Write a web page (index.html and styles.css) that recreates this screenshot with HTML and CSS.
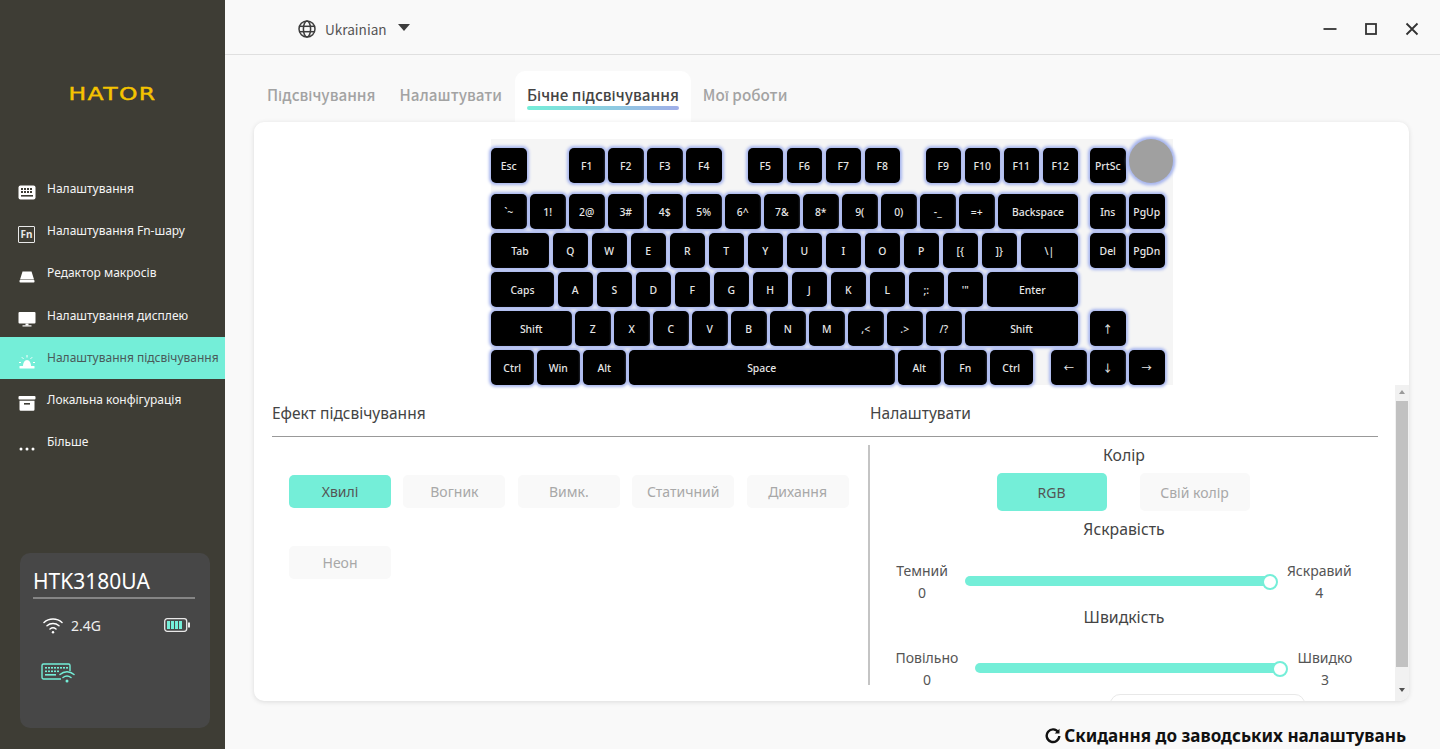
FILE: index.html
```html
<!DOCTYPE html>
<html lang="uk">
<head>
<meta charset="utf-8">
<title>HATOR</title>
<link rel="stylesheet" href="styles.css">
</head>
<body>
<div class="app">
  <aside class="sidebar">
    <div class="logo">HATOR</div>
    <nav class="nav">
      <div class="nav-item">
        <svg class="nav-icon" viewBox="0 0 18 15"><rect x="0.5" y="0.5" width="17" height="14" rx="2" fill="#fff"/><g fill="#3e3d35"><rect x="3" y="3" width="2" height="2"/><rect x="6" y="3" width="2" height="2"/><rect x="9" y="3" width="2" height="2"/><rect x="12" y="3" width="2" height="2"/><rect x="3" y="6" width="2" height="2"/><rect x="6" y="6" width="2" height="2"/><rect x="9" y="6" width="2" height="2"/><rect x="12" y="6" width="2" height="2"/><rect x="3" y="10" width="12" height="1.6"/></g></svg>
        <span>Налаштування</span>
      </div>
      <div class="nav-item">
        <span class="fn-icon">Fn</span>
        <span>Налаштування Fn-шару</span>
      </div>
      <div class="nav-item">
        <svg class="nav-icon" viewBox="0 0 18 15"><path d="M4.5 2.5h9l2.5 8H2z" fill="#fff"/><rect x="1.5" y="11" width="15" height="2.5" rx="0.8" fill="#fff"/></svg>
        <span>Редактор макросів</span>
      </div>
      <div class="nav-item">
        <svg class="nav-icon" viewBox="0 0 18 15"><rect x="0.5" y="0" width="17" height="11.5" rx="1" fill="#fff"/><rect x="7.5" y="11.5" width="3" height="2" fill="#fff"/><rect x="4.5" y="13.3" width="9" height="1.2" fill="#fff"/></svg>
        <span>Налаштування дисплею</span>
      </div>
      <div class="nav-item nav-active">
        <svg class="nav-icon" viewBox="0 0 18 15"><path d="M5 12c0-3 1.6-6 4-6s4 3 4 6z" fill="#fff"/><rect x="1.5" y="12" width="15" height="2.5" rx="0.6" fill="#fff"/><g stroke="#fff" stroke-width="1" fill="none"><path d="M9 1v2.5"/><path d="M3.8 3.2l1.7 1.7"/><path d="M14.2 3.2l-1.7 1.7"/><path d="M1 8.5h2"/><path d="M15 8.5h2"/></g></svg>
        <span>Налаштування підсвічування</span>
      </div>
      <div class="nav-item">
        <svg class="nav-icon" viewBox="0 0 18 15"><rect x="0.5" y="0" width="17" height="3.6" rx="1" fill="#fff"/><path d="M1.5 4.8h15v8.7a1.2 1.2 0 0 1-1.2 1.2H2.7a1.2 1.2 0 0 1-1.2-1.2z" fill="#fff"/><rect x="6" y="7" width="6" height="1.6" fill="#3e3d35"/></svg>
        <span>Локальна конфігурація</span>
      </div>
      <div class="nav-item">
        <svg class="nav-icon" viewBox="0 0 18 15"><circle cx="3" cy="11" r="1.5" fill="#fff"/><circle cx="9" cy="11" r="1.5" fill="#fff"/><circle cx="15" cy="11" r="1.5" fill="#fff"/></svg>
        <span>Більше</span>
      </div>
    </nav>
    <div class="device">
      <div class="device-name">HTK3180UA</div>
      <div class="device-status">
        <svg class="wifi" viewBox="0 0 20 17" fill="none" stroke="#fff" stroke-width="1.5" stroke-linecap="round"><path d="M1 5.5c5-4.6 13-4.6 18 0"/><path d="M4 8.8c3.400-3 8.600-3 12 0"/><path d="M7 12c1.800-1.400 4.200-1.400 6 0"/><circle cx="10" cy="15.300" r="1.200" fill="#fff" stroke="none"/></svg>
        <span class="conn">2.4G</span>
        <svg class="battery" viewBox="0 0 26 14"><rect x="0.7" y="0.7" width="22" height="12.600" rx="2.500" fill="none" stroke="#e8e8e8" stroke-width="1.300"/><rect x="24" y="4.500" width="2" height="5" fill="#e8e8e8"/><g fill="#74eed8"><rect x="3" y="3" width="3" height="8"/><rect x="7" y="3" width="3" height="8"/><rect x="11" y="3" width="3" height="8"/><rect x="15" y="3" width="3" height="8"/></g></svg>
      </div>
      <svg class="kb-wifi" viewBox="0 0 34 20" fill="none"><path d="M20 16H2.500A1.500 1.500 0 0 1 1 14.500V2.500A1.500 1.500 0 0 1 2.500 1h25A1.500 1.500 0 0 1 29 2.500V8" stroke="#74eed8" stroke-width="1.400"/><g fill="#74eed8"><rect x="4" y="4" width="2" height="1.600"/><rect x="7" y="4" width="2" height="1.600"/><rect x="10" y="4" width="2" height="1.600"/><rect x="13" y="4" width="2" height="1.600"/><rect x="16" y="4" width="2" height="1.600"/><rect x="19" y="4" width="2" height="1.600"/><rect x="22" y="4" width="2" height="1.600"/><rect x="25" y="4" width="2" height="1.600"/><rect x="4" y="7.500" width="2" height="1.600"/><rect x="7" y="7.500" width="2" height="1.600"/><rect x="10" y="7.500" width="2" height="1.600"/><rect x="13" y="7.500" width="2" height="1.600"/><rect x="16" y="7.500" width="2" height="1.600"/><rect x="4" y="11" width="11" height="1.600"/></g><g stroke="#74eed8" stroke-width="1.500" stroke-linecap="round"><path d="M19 11.500c4-3.600 10-3.600 14 0"/><path d="M22 14.500c2.400-1.800 5.600-1.800 8 0"/></g><circle cx="26" cy="18" r="1.500" fill="#74eed8"/></svg>
    </div>
  </aside>

  <main class="main">
    <header class="topbar">
      <div class="lang">
        <svg class="globe" viewBox="0 0 18 18" fill="none" stroke="#3d3d3d" stroke-width="1.500"><circle cx="9" cy="9" r="8"/><ellipse cx="9" cy="9" rx="3.600" ry="8"/><path d="M1.500 6.300h15"/><path d="M1.500 11.700h15"/></svg>
        <span class="lang-name">Ukrainian</span>
        <span class="caret"></span>
      </div>
      <div class="win-controls">
        <svg class="win-btn" viewBox="0 0 14 14"><path d="M0.500 7h13" stroke="#333" stroke-width="1.800"/></svg>
        <svg class="win-btn" viewBox="0 0 14 14"><rect x="2" y="2" width="10" height="10" fill="none" stroke="#333" stroke-width="1.800"/></svg>
        <svg class="win-btn" viewBox="0 0 14 14"><path d="M1.500 1.500l11 11M12.500 1.500l-11 11" stroke="#333" stroke-width="1.800"/></svg>
      </div>
    </header>

    <div class="tabs">
      <div class="tab">Підсвічування</div>
      <div class="tab">Налаштувати</div>
      <div class="tab tab-active"><span class="tab-label">Бічне підсвічування</span></div>
      <div class="tab">Мої роботи</div>
    </div>

    <section class="card">
      <div class="keyboard">
        <div class="row row-fn">
          <div class="key">Esc</div>
          <div class="key gap-f1">F1</div><div class="key">F2</div><div class="key">F3</div><div class="key">F4</div>
          <div class="key gap-f5">F5</div><div class="key">F6</div><div class="key">F7</div><div class="key">F8</div>
          <div class="key gap-f9">F9</div><div class="key">F10</div><div class="key">F11</div><div class="key">F12</div>
          <div class="key gap-nav">PrtSc</div>
          <div class="knob"></div>
        </div>
        <div class="row">
          <div class="key">`~</div><div class="key">1!</div><div class="key">2@</div><div class="key">3#</div><div class="key">4$</div><div class="key">5%</div><div class="key">6^</div><div class="key">7&amp;</div><div class="key">8*</div><div class="key">9(</div><div class="key">0)</div><div class="key">-_</div><div class="key">=+</div>
          <div class="key w-back">Backspace</div>
          <div class="key gap-nav">Ins</div><div class="key">PgUp</div>
        </div>
        <div class="row">
          <div class="key w-tab">Tab</div>
          <div class="key">Q</div><div class="key">W</div><div class="key">E</div><div class="key">R</div><div class="key">T</div><div class="key">Y</div><div class="key">U</div><div class="key">I</div><div class="key">O</div><div class="key">P</div><div class="key">[{</div><div class="key">]}</div>
          <div class="key w-slash">\|</div>
          <div class="key gap-nav">Del</div><div class="key">PgDn</div>
        </div>
        <div class="row">
          <div class="key w-caps">Caps</div>
          <div class="key">A</div><div class="key">S</div><div class="key">D</div><div class="key">F</div><div class="key">G</div><div class="key">H</div><div class="key">J</div><div class="key">K</div><div class="key">L</div><div class="key">;:</div><div class="key">'"</div>
          <div class="key w-enter">Enter</div>
        </div>
        <div class="row">
          <div class="key w-lshift">Shift</div>
          <div class="key">Z</div><div class="key">X</div><div class="key">C</div><div class="key">V</div><div class="key">B</div><div class="key">N</div><div class="key">M</div><div class="key">,&lt;</div><div class="key">.&gt;</div><div class="key">/?</div>
          <div class="key w-rshift">Shift</div>
          <div class="key gap-nav">↑</div>
        </div>
        <div class="row">
          <div class="key w-mod">Ctrl</div><div class="key w-mod">Win</div><div class="key w-mod">Alt</div>
          <div class="key w-space">Space</div>
          <div class="key w-mod">Alt</div><div class="key w-mod">Fn</div><div class="key w-mod">Ctrl</div>
          <div class="key gap-arrows">←</div><div class="key">↓</div><div class="key">→</div>
        </div>
      </div>

      <div class="lower">
        <div class="panel">
          <div class="panel-head">
            <div class="head-left">Ефект підсвічування</div>
            <div class="head-right">Налаштувати</div>
          </div>
          <div class="cols">
            <div class="effects">
              <div class="btn btn-on">Хвилі</div>
              <div class="btn">Вогник</div>
              <div class="btn">Вимк.</div>
              <div class="btn">Статичний</div>
              <div class="btn">Дихання</div>
              <div class="btn">Неон</div>
            </div>
            <div class="settings">
              <div class="set-title">Колір</div>
              <div class="color-btns">
                <div class="btn btn-color btn-on">RGB</div>
                <div class="btn btn-color">Свій колір</div>
              </div>
              <div class="set-title title-next">Яскравість</div>
              <div class="slider-row">
                <div class="slider-label"><div>Темний</div><div>0</div></div>
                <div class="track"><span class="thumb"></span></div>
                <div class="slider-label"><div>Яскравий</div><div>4</div></div>
              </div>
              <div class="set-title title-speed">Швидкість</div>
              <div class="slider-row slider-row-b">
                <div class="slider-label"><div>Повільно</div><div>0</div></div>
                <div class="track"><span class="thumb"></span></div>
                <div class="slider-label"><div>Швидко</div><div>3</div></div>
              </div>
              <div class="cut-btn"></div>
            </div>
          </div>
        </div>
        <div class="scrollbar">
          <span class="arrow arrow-up"></span>
          <div class="scroll-thumb"></div>
          <span class="arrow arrow-down"></span>
        </div>
      </div>
    </section>

    <div class="reset">
      <svg class="reset-icon" viewBox="0 0 16 16" fill="none"><path d="M13.300 4.300A6.300 6.300 0 1 0 14.300 8" stroke="#111" stroke-width="2.400"/><path d="M14.500 0.800v4.800H9.700z" fill="#111"/></svg>
      <span>Скидання до заводських налаштувань</span>
    </div>
  </main>
</div>
</body>
</html>
```

FILE: styles.css
```css
* { box-sizing: border-box; }

html, body {
  margin: 0;
  height: 100%;
  overflow: hidden;
}

body {
  font-family: "Noto Sans", "Noto Sans CJK SC", sans-serif;
  background: #f9f9f9;
  color: #444;
}

.app {
  display: flex;
  width: 1440px;
  height: 749px;
}

/* Sidebar */
.sidebar {
  width: 225px;
  flex: none;
  background: #3e3d35;
  display: flex;
  flex-direction: column;
}

.logo {
  margin-top: 84px;
  height: 21px;
  line-height: 21px;
  text-align: center;
  color: #f5c400;
  font-family: "DejaVu Sans", sans-serif;
  font-weight: 400;
  font-size: 17px;
  letter-spacing: 1px;
  -webkit-text-stroke: 0.4px #f5c400;
  transform: scaleX(1.38);
}

.nav {
  margin-top: 63px;
  display: flex;
  flex-direction: column;
}

.nav-item {
  height: 42.3px;
  display: flex;
  align-items: center;
  padding-left: 18px;
  font-size: 12px;
  color: #f4f4f4;
}

.nav-item span:last-child {
  margin-top: -2px;
}

.nav-active {
  background: #74eed8;
  color: #4a5a5a;
}

.nav-icon {
  width: 18px;
  height: 15px;
  flex: none;
  margin-right: 11px;
  margin-top: 6px;
}

.nav-item .fn-icon {
  width: 17px;
  height: 17px;
  flex: none;
  margin-right: 12px;
  margin-top: 6px;
  border: 1.5px solid #e8e8e8;
  border-radius: 1px;
  color: #e8e8e8;
  font-size: 10px;
  font-weight: 700;
  line-height: 14px;
  text-align: center;
}

.device {
  margin: 89px 15px 0 20px;
  height: 175px;
  background: #474747;
  border-radius: 10px;
  padding: 13px 15px 0 13px;
}

.device-name {
  color: #fff;
  font-size: 21px;
  line-height: 30px;
  height: 33px;
  border-bottom: 2px solid #858585;
}

.device-status {
  margin-top: 16px;
  padding: 0 5px 0 10px;
  display: flex;
  align-items: center;
  height: 20px;
  color: #eee;
  font-size: 14px;
}

.wifi {
  width: 20px;
  height: 17px;
  flex: none;
}

.conn {
  margin-left: 8px;
}

.battery {
  width: 26px;
  height: 14px;
  flex: none;
  margin-left: auto;
}

.kb-wifi {
  display: block;
  width: 34px;
  height: 20px;
  margin: 28px 0 0 8px;
}

/* Main */
.main {
  flex: 1;
  min-width: 0;
  display: flex;
  flex-direction: column;
}

.topbar {
  height: 55px;
  flex: none;
  border-bottom: 1px solid #e0e0e0;
  display: flex;
  align-items: center;
  justify-content: space-between;
  padding: 0 21px 0 73px;
}

.lang {
  display: flex;
  align-items: center;
  margin-top: 4px;
}

.globe {
  width: 18px;
  height: 18px;
}

.lang-name {
  margin-left: 9px;
  font-family: "Noto Sans CJK SC", "Noto Sans", sans-serif;
  font-size: 13.6px;
  color: #555;
}

.caret {
  margin: -3px 0 0 11px;
  width: 0;
  height: 0;
  border-left: 6px solid transparent;
  border-right: 6px solid transparent;
  border-top: 7px solid #3d3d3d;
}

.win-controls {
  display: flex;
  gap: 27px;
  margin-top: 3px;
}

.win-btn {
  width: 14px;
  height: 14px;
}

.tabs {
  margin: 16px 0 0 30px;
  height: 51px;
  flex: none;
  display: flex;
  font-family: "Noto Sans CJK SC", "Noto Sans", sans-serif;
  font-size: 15.2px;
  font-weight: 500;
  color: #a3a3a3;
}

.tab {
  padding: 11px 12px 0;
  line-height: 24px;
  white-space: nowrap;
}

.tab-active {
  margin-left: 1px;
  background: #fff;
  color: #444;
  border-radius: 10px 10px 0 0;
}

.tab-label {
  display: inline-block;
  padding-bottom: 4px;
  position: relative;
}

.tab-label::after {
  content: "";
  position: absolute;
  left: 0;
  right: 0;
  bottom: 0;
  height: 4px;
  border-radius: 2px;
  background: linear-gradient(90deg, #74eed8, #a0aee8);
}

.card {
  margin-left: 29px;
  width: 1155px;
  height: 579px;
  flex: none;
  background: #fff;
  border-radius: 10px;
  box-shadow: 0 1px 5px rgba(0, 0, 0, 0.12);
  display: flex;
  flex-direction: column;
  overflow: hidden;
}

/* Keyboard */
.keyboard {
  margin: 17px 0 0 237px;
  width: 682px;
  height: 246px;
  flex: none;
  background: #f5f5f5;
  display: flex;
  flex-direction: column;
  gap: 3.5px;
}

.row {
  display: flex;
  gap: 3.5px;
  align-items: flex-end;
}

.row-fn {
  height: 44px;
  margin-bottom: 7px;
}

.key {
  width: 35.5px;
  height: 35.5px;
  flex: none;
  background: #000;
  color: #e6e6e6;
  border-radius: 5px;
  box-shadow: 0 0 3px 1.5px #a8b6ee;
  font-size: 10.4px;
  font-weight: 500;
  line-height: 36px;
  text-align: center;
  white-space: nowrap;
}

.gap-f1 { margin-left: 39px; }
.gap-f5 { margin-left: 22.5px; }
.gap-f9 { margin-left: 22px; }
.gap-nav { margin-left: 8.5px; }
.gap-arrows { margin-left: 15px; }

.w-back { width: 80px; }
.w-tab { width: 58px; }
.w-slash { width: 57.5px; }
.w-caps { width: 63px; }
.w-enter { width: 91.5px; }
.w-lshift { width: 80.5px; }
.w-rshift { width: 113px; }
.w-mod { width: 42.5px; }
.w-space { width: 265.5px; }

.knob {
  width: 44px;
  height: 44px;
  flex: none;
  border-radius: 50%;
  background: #a0a0a0;
  box-shadow: 0 0 3px 2.5px #a8b6ee;
}

/* Lower panel */
.lower {
  flex: 1;
  min-height: 0;
  display: flex;
}

.panel {
  flex: 1;
  min-width: 0;
  padding: 0 17px 0 18px;
  overflow: hidden;
}

.panel-head {
  display: flex;
  height: 52px;
  padding-top: 18px;
  border-bottom: 1px solid #999;
  font-size: 15.5px;
  line-height: 20px;
  color: #444;
}

.head-left { width: 598px; }

.cols {
  display: flex;
  align-items: flex-start;
  margin-top: 8px;
}

.effects {
  width: 598px;
  height: 240px;
  flex: none;
  border-right: 2px solid #c4c4c4;
  padding: 30px 0 0 17px;
  display: grid;
  grid-template-columns: repeat(5, 102px);
  grid-auto-rows: 33px;
  column-gap: 12.4px;
  row-gap: 38px;
  align-content: start;
}

.btn {
  background: #f9f9f9;
  color: #a8a8a8;
  border-radius: 5px;
  font-size: 14px;
  display: flex;
  align-items: center;
  justify-content: center;
}

.btn-on {
  background: #74eed8;
  color: #555;
}

.settings {
  flex: 1;
  min-width: 0;
  display: flex;
  flex-direction: column;
  align-items: center;
  color: #555;
}

.set-title {
  font-size: 15.8px;
  line-height: 20px;
  color: #444;
}

.color-btns {
  margin: 8px 0 0 -2px;
  display: flex;
  gap: 33px;
}

.btn-color {
  width: 110px;
  height: 38px;
}

.set-title.title-next { margin-top: 8px; }
.set-title.title-speed { margin-top: 3px; }

.slider-row {
  margin-top: 21px;
  display: flex;
  align-items: center;
  gap: 17px;
}

.slider-row-b { margin-top: 20px; }

.slider-label {
  font-size: 14px;
  line-height: 22px;
  text-align: center;
  white-space: nowrap;
}

.track {
  position: relative;
  width: 305px;
  height: 10px;
  margin-bottom: 3px;
  background: #74eed8;
  border-radius: 5px;
}

.thumb {
  position: absolute;
  right: -8px;
  top: -2px;
  width: 16px;
  height: 16px;
  background: #fff;
  border: 2px solid #74eed8;
  border-radius: 50%;
}

.cut-btn {
  margin: 3px 0 0 240px;
  align-self: flex-start;
  width: 195px;
  height: 40px;
  flex: none;
  border: 1px solid #e8e8e8;
  border-radius: 10px;
}

/* Scrollbar */
.scrollbar {
  width: 14px;
  flex: none;
  background: #f1f1f1;
  display: flex;
  flex-direction: column;
  align-items: center;
  padding-top: 5px;
}

.arrow {
  width: 0;
  height: 0;
  flex: none;
  border-left: 3.5px solid transparent;
  border-right: 3.5px solid transparent;
}

.arrow-up { border-bottom: 4px solid #9a9a9a; }
.arrow-down { border-top: 4px solid #505050; margin-top: 21px; }

.scroll-thumb {
  margin-top: 7px;
  width: 12px;
  height: 266px;
  flex: none;
  background: #c1c1c1;
}

/* Reset */
.reset {
  margin-top: 25px;
  margin-right: 34px;
  display: flex;
  align-items: center;
  justify-content: flex-end;
  font-size: 17.1px;
  font-weight: 700;
  line-height: 20px;
  color: #111;
}

.reset-icon {
  width: 16px;
  height: 16px;
  margin-right: 3px;
}
```
